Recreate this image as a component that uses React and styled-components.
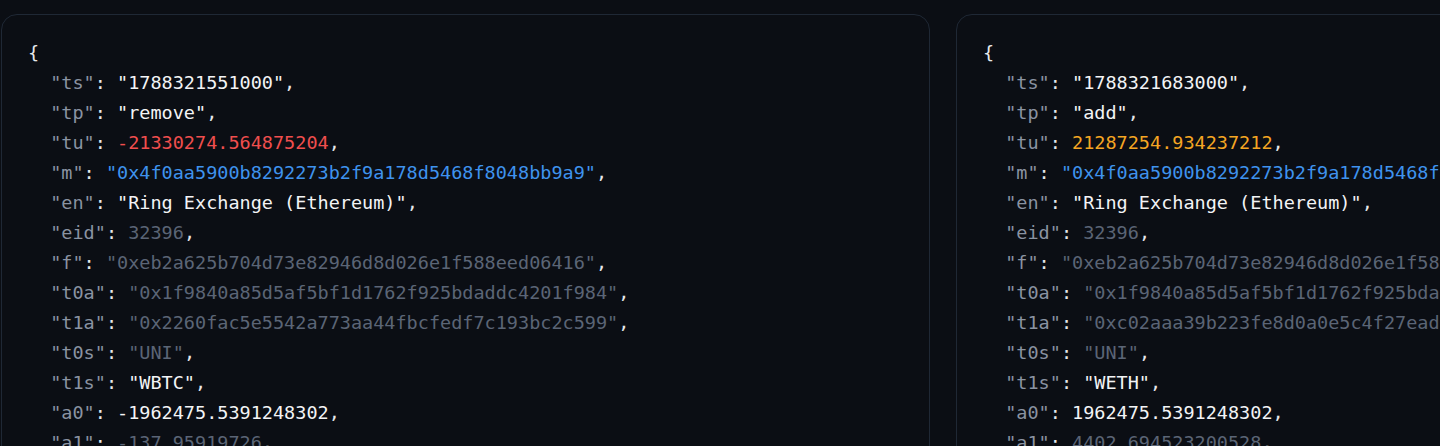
import React from "react"
import styled, { createGlobalStyle } from "styled-components"

const GlobalStyle = createGlobalStyle`
  html, body {
    margin: 0;
    padding: 0;
    background: #0b0e14;
    overflow: hidden;
  }
`

const Page = styled.div`
  display: flex;
  flex-direction: row;
  gap: 26px;
  padding: 14px 0 0 1px;
  width: max-content;
`

const Card = styled.div`
  width: 929px;
  flex-shrink: 0;
  border: 1px solid #1f2835;
  border-radius: 16px;
  background: #0b0e14;
  padding: 23px 26px 24px;
  box-sizing: border-box;
  height: 460px;
`

const Code = styled.pre`
  margin: 0;
  font-family: "DejaVu Sans Mono", "Liberation Mono", monospace;
  font-size: 18.5px;
  line-height: 30px;
  color: #e6e8eb;
  white-space: pre;
`

const Line = styled.div`
  padding-left: ${(p) => (p.$indent ? "22.2px" : "0")};
`

const Key = styled.span`
  color: #8a93a2;
`

const Value = styled.span`
  color: ${(p) =>
    ({
      plain: "#f3f4f6",
      neg: "#f04e4e",
      pos: "#f5a623",
      link: "#3f93ee",
      dim: "#5b6576",
    }[p.$tone])};
`

const records = [
  [
    ["ts", '"1788321551000"', "plain"],
    ["tp", '"remove"', "plain"],
    ["tu", "-21330274.564875204", "neg"],
    ["m", '"0x4f0aa5900b8292273b2f9a178d5468f8048bb9a9"', "link"],
    ["en", '"Ring Exchange (Ethereum)"', "plain"],
    ["eid", "32396", "dim"],
    ["f", '"0xeb2a625b704d73e82946d8d026e1f588eed06416"', "dim"],
    ["t0a", '"0x1f9840a85d5af5bf1d1762f925bdaddc4201f984"', "dim"],
    ["t1a", '"0x2260fac5e5542a773aa44fbcfedf7c193bc2c599"', "dim"],
    ["t0s", '"UNI"', "dim"],
    ["t1s", '"WBTC"', "plain"],
    ["a0", "-1962475.5391248302", "plain"],
    ["a1", "-137.95919726", "dim"],
  ],
  [
    ["ts", '"1788321683000"', "plain"],
    ["tp", '"add"', "plain"],
    ["tu", "21287254.934237212", "pos"],
    ["m", '"0x4f0aa5900b8292273b2f9a178d5468f8048bb9a9"', "link"],
    ["en", '"Ring Exchange (Ethereum)"', "plain"],
    ["eid", "32396", "dim"],
    ["f", '"0xeb2a625b704d73e82946d8d026e1f588eed06416"', "dim"],
    ["t0a", '"0x1f9840a85d5af5bf1d1762f925bdaddc4201f984"', "dim"],
    ["t1a", '"0xc02aaa39b223fe8d0a0e5c4f27ead9083c756cc2"', "dim"],
    ["t0s", '"UNI"', "dim"],
    ["t1s", '"WETH"', "plain"],
    ["a0", "1962475.5391248302", "plain"],
    ["a1", "4402.694523200528", "dim"],
  ],
]

const JsonCard = ({ fields }) => (
  <Card>
    <Code>
      <Line>{"{"}</Line>
      {fields.map(([k, v, tone]) => (
        <Line key={k} $indent>
          <Key>"{k}"</Key>
          {": "}
          <Value $tone={tone}>{v}</Value>,
        </Line>
      ))}
    </Code>
  </Card>
)

export default function App() {
  return (
    <>
      <GlobalStyle />
      <Page>
        {records.map((r, i) => (
          <JsonCard key={i} fields={r} />
        ))}
      </Page>
    </>
  )
}
